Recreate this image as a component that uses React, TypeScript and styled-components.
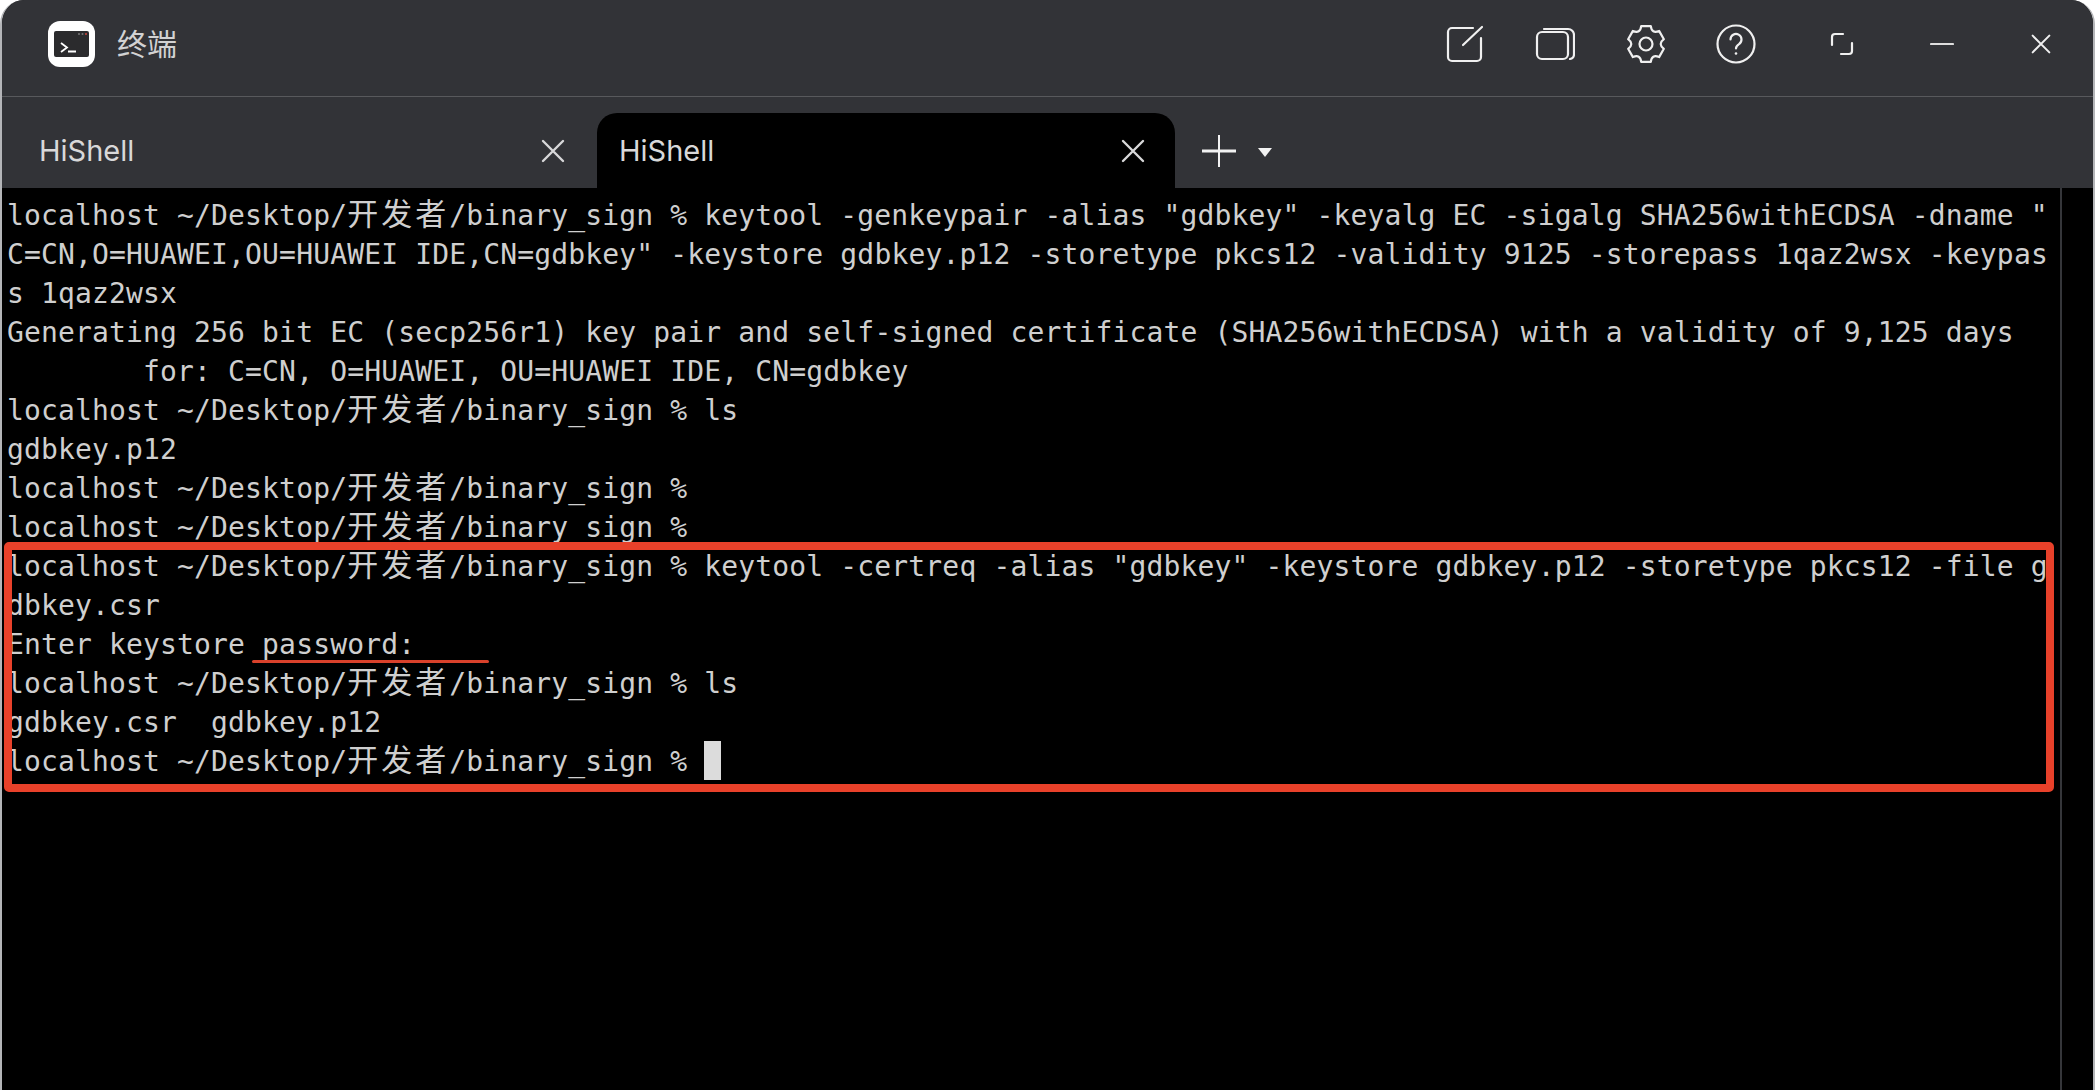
import styled, { createGlobalStyle } from "styled-components";

const GlobalStyle = createGlobalStyle`
  html, body {
    margin: 0;
    padding: 0;
    height: 100%;
    background: #fff;
    overflow: hidden;
  }
  #root {
    height: 100%;
  }
`;

const Window = styled.div`
  display: flex;
  flex-direction: column;
  box-sizing: border-box;
  height: 1090px;
  border-left: 2px solid #b4b5b8;
  border-right: 2px solid #b4b5b8;
  border-top-left-radius: 24px;
  border-top-right-radius: 24px;
  overflow: hidden;
  background: #000;
`;

const TitleBar = styled.header`
  display: flex;
  align-items: center;
  box-sizing: border-box;
  height: 97px;
  padding: 0 28px 8px 46px;
  background: #323337;
  border-bottom: 1px solid #58595c;
`;

const AppTitle = styled.span`
  margin: -5px auto 0 22px;
  font-family: "Noto Sans CJK SC", "Noto Sans", sans-serif;
  font-size: 30px;
  color: #d2d2d3;
`;

const ToolGroup = styled.div`
  display: flex;
  gap: 42.5px;
`;

const WindowGroup = styled.div`
  display: flex;
  gap: 51.5px;
  margin-left: 58px;
`;

const IconSlot = styled.div`
  display: flex;
  align-items: center;
  justify-content: center;
  width: 48px;
  height: 48px;
  color: #f0f0f0;
`;

const TabBar = styled.nav`
  display: flex;
  align-items: flex-end;
  gap: 2px;
  box-sizing: border-box;
  height: 91px;
  padding-left: 15px;
  background: #323337;
`;

const Tab = styled.div<{ $active?: boolean }>`
  display: flex;
  align-items: center;
  justify-content: space-between;
  box-sizing: border-box;
  width: 578px;
  height: 75px;
  padding: 0 30px 0 22px;
  border-radius: 20px 20px 0 0;
  background: ${(p) => (p.$active ? "#000" : "transparent")};
  font-family: Inter, "Noto Sans", sans-serif;
  font-size: 29px;
  color: #d8d8d9;
`;

const NewTab = styled.div`
  display: flex;
  align-items: center;
  gap: 22px;
  height: 75px;
  margin-left: 25px;
`;

const Caret = styled.span`
  width: 0;
  height: 0;
  border-left: 7px solid transparent;
  border-right: 7px solid transparent;
  border-top: 9px solid #f2f2f2;
  margin-top: 3px;
`;

const Terminal = styled.main`
  position: relative;
  display: flex;
  flex: 1;
  min-height: 0;
  background: #000;
`;

const Screen = styled.div`
  flex: 1;
  padding: 7px 0 0 5px;
  font-family: "DejaVu Sans Mono", "Liberation Mono", "Noto Sans CJK SC", monospace;
  font-size: 28px;
  letter-spacing: 0.15px;
  color: #cfcfcf;
`;

const Line = styled.div`
  height: 39px;
  line-height: 41px;
  white-space: pre;
`;

const Cjk = styled.span`
  font-family: "Noto Sans CJK SC", sans-serif;
  font-size: 31px;
  line-height: 0;
  letter-spacing: 3px;
`;

const Cursor = styled.span`
  display: inline-block;
  width: 17px;
  height: 39px;
  vertical-align: top;
  background: #dcdcdc;
`;

const ScrollTrack = styled.div`
  flex: none;
  box-sizing: border-box;
  width: 33px;
  border-left: 2px solid #35363a;
`;

const MarkBox = styled.div`
  position: absolute;
  left: 2px;
  top: 354px;
  box-sizing: border-box;
  width: 2050px;
  height: 250px;
  border: 8px solid #e8412a;
  border-radius: 5px;
`;

const MarkLine = styled.div`
  position: absolute;
  left: 250px;
  top: 472px;
  width: 237px;
  height: 3px;
  border-radius: 2px;
  background: #d9412b;
`;

const LINES = [
  'localhost ~/Desktop/开发者/binary_sign % keytool -genkeypair -alias "gdbkey" -keyalg EC -sigalg SHA256withECDSA -dname "',
  'C=CN,O=HUAWEI,OU=HUAWEI IDE,CN=gdbkey" -keystore gdbkey.p12 -storetype pkcs12 -validity 9125 -storepass 1qaz2wsx -keypas',
  "s 1qaz2wsx",
  "Generating 256 bit EC (secp256r1) key pair and self-signed certificate (SHA256withECDSA) with a validity of 9,125 days",
  "        for: C=CN, O=HUAWEI, OU=HUAWEI IDE, CN=gdbkey",
  "localhost ~/Desktop/开发者/binary_sign % ls",
  "gdbkey.p12",
  "localhost ~/Desktop/开发者/binary_sign % ",
  "localhost ~/Desktop/开发者/binary_sign % ",
  'localhost ~/Desktop/开发者/binary_sign % keytool -certreq -alias "gdbkey" -keystore gdbkey.p12 -storetype pkcs12 -file g',
  "dbkey.csr",
  "Enter keystore password:",
  "localhost ~/Desktop/开发者/binary_sign % ls",
  "gdbkey.csr  gdbkey.p12",
];

const renderText = (text: string) =>
  text.split(/([\u4e00-\u9fff]+)/).map((part, i) =>
    /[\u4e00-\u9fff]/.test(part) ? <Cjk key={i}>{part}</Cjk> : part
  );

// six rounded lobes, one pointing straight up
const gearPath = () => {
  const pt = (deg: number, r: number) => {
    const a = (deg * Math.PI) / 180;
    return `${(20 + r * Math.cos(a)).toFixed(2)} ${(20 + r * Math.sin(a)).toFixed(2)}`;
  };
  let d = `M${pt(-90 - 15, 18.5)}`;
  for (let k = 0; k < 6; k++) {
    const t = -90 + k * 60;
    d += ` L${pt(t + 15, 18.5)} Q${pt(t + 30, 11.5)} ${pt(t + 45, 18.5)}`;
  }
  return d + "Z";
};

const Logo = () => (
  <svg width="47" height="46" viewBox="0 0 47 46">
    <rect width="47" height="46" rx="12" fill="#fff" />
    <rect x="6" y="10" width="35" height="26" rx="2" fill="#2b2b2d" />
    <circle cx="31" cy="13" r="1" fill="#777" />
    <circle cx="34.5" cy="13" r="1" fill="#777" />
    <circle cx="38" cy="13" r="1" fill="#d0453a" />
    <path d="M13 22l6 4.5-6 4.5" fill="none" stroke="#fff" strokeWidth="1.8" />
    <path d="M20 30.5h8" fill="none" stroke="#fff" strokeWidth="1.8" />
  </svg>
);

const StrokeIcon = ({ d, size }: { d: string; size: number }) => (
  <svg width={size} height={size} viewBox={`0 0 ${size} ${size}`} fill="none" stroke="currentColor" strokeWidth="2.2" strokeLinecap="round" strokeLinejoin="round">
    <path d={d} />
  </svg>
);

const EditIcon = () => (
  <StrokeIcon size={40} d="M28 4H7a4 4 0 0 0-4 4v25a4 4 0 0 0 4 4h25a4 4 0 0 0 4-4V14M18 21L37 3" />
);

const TabsIcon = () => (
  <StrokeIcon size={40} d="M7 8h21a5 5 0 0 1 5 5v17a5 5 0 0 1-5 5H7a5 5 0 0 1-5-5V13a5 5 0 0 1 5-5zM9 5h24a6 6 0 0 1 6 6v19a5 5 0 0 1-4 5" />
);

const GearIcon = () => (
  <svg width="40" height="40" viewBox="0 0 40 40" fill="none" stroke="currentColor" strokeWidth="2.2" strokeLinejoin="round">
    <path d={gearPath()} />
    <circle cx="20" cy="20" r="6.5" />
  </svg>
);

const HelpIcon = () => (
  <svg width="40" height="40" viewBox="0 0 40 40" fill="none" stroke="currentColor" strokeWidth="2.2" strokeLinecap="round">
    <circle cx="20" cy="20" r="18.5" />
    <path d="M14.500 15.500a5.500 5.500 0 1 1 8.500 4.600c-2 1.300-3 2.400-3 4.400" />
    <circle cx="20" cy="29.500" r="1.300" fill="currentColor" stroke="none" />
  </svg>
);

const RestoreIcon = () => (
  <StrokeIcon size={24} d="M2 13V5a3 3 0 0 1 3-3h8M22 11v8a3 3 0 0 1-3 3h-8" />
);

const MinimizeIcon = () => (
  <svg width="24" height="4" viewBox="0 0 24 4">
    <path d="M1 2h22" stroke="#dedede" strokeWidth="2.200" strokeLinecap="round" />
  </svg>
);

const CloseIcon = ({ size }: { size: number }) => (
  <svg width={size} height={size} viewBox="0 0 24 24" fill="none" stroke="currentColor" strokeWidth="2.400" strokeLinecap="round">
    <path d="M2 2l20 20M22 2L2 22" />
  </svg>
);

const PlusIcon = () => (
  <svg width="34" height="32" viewBox="0 0 34 32">
    <path d="M0 16h34" stroke="#f2f2f2" strokeWidth="3" />
    <path d="M17 0v32" stroke="#f2f2f2" strokeWidth="2" />
  </svg>
);

export default function App() {
  return (
    <>
      <GlobalStyle />
      <Window>
        <TitleBar>
          <Logo />
          <AppTitle>终端</AppTitle>
          <ToolGroup>
            <IconSlot><EditIcon /></IconSlot>
            <IconSlot><TabsIcon /></IconSlot>
            <IconSlot><GearIcon /></IconSlot>
            <IconSlot><HelpIcon /></IconSlot>
          </ToolGroup>
          <WindowGroup>
            <IconSlot><RestoreIcon /></IconSlot>
            <IconSlot><MinimizeIcon /></IconSlot>
            <IconSlot><CloseIcon size={20} /></IconSlot>
          </WindowGroup>
        </TitleBar>
        <TabBar>
          <Tab>
            HiShell
            <CloseIcon size={24} />
          </Tab>
          <Tab $active>
            HiShell
            <CloseIcon size={24} />
          </Tab>
          <NewTab>
            <PlusIcon />
            <Caret />
          </NewTab>
        </TabBar>
        <Terminal>
          <Screen>
            {LINES.map((text, i) => (
              <Line key={i}>{renderText(text)}</Line>
            ))}
            <Line>
              {renderText("localhost ~/Desktop/开发者/binary_sign % ")}
              <Cursor />
            </Line>
          </Screen>
          <ScrollTrack />
          <MarkBox />
          <MarkLine />
        </Terminal>
      </Window>
    </>
  );
}
